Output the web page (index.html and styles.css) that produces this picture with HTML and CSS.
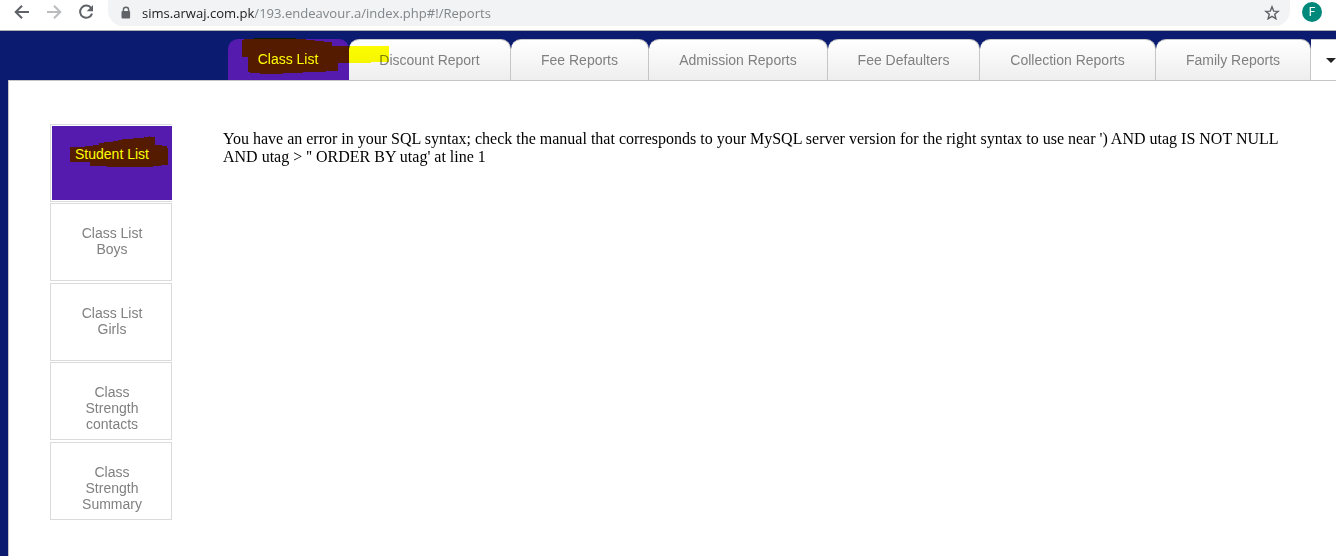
FILE: index.html
```html
<!DOCTYPE html>
<html lang="en">
<head>
<meta charset="utf-8">
<title>Reports</title>
<link rel="stylesheet" href="styles.css">
</head>
<body>
<header class="toolbar">
  <svg class="nav-icons" width="108" height="30" viewBox="0 0 108 30" fill="none" stroke="#5f6368" stroke-width="2">
    <path d="M29 12H16.5M22 5.7L15.7 12L22 18.3"/>
    <path d="M47 12H59.5M54 5.7L60.3 12L54 18.3" stroke="#babcbe"/>
    <path d="M91.2 8.2A6.1 6.1 0 1 0 92 13.6"/>
    <path d="M93 5V11.3H86.7Z" fill="#5f6368" stroke="none"/>
  </svg>
  <div class="address">
    <svg class="lock" width="10" height="14" viewBox="0 0 10 14"><path d="M2.4 6V3.8a2.6 2.6 0 0 1 5.2 0V6" fill="none" stroke="#5f6368" stroke-width="1.4"/><rect x="0.5" y="5" width="8.6" height="7.5" rx="1" fill="#5f6368"/></svg>
    <span class="url"><b>sims.arwaj.com.pk</b>/193.endeavour.a/index.php#!/Reports</span>
    <svg class="star" width="16" height="16" viewBox="0 0 16 16"><path d="M8 1.8L9.7 6.1L14.2 6.4L10.7 9.3L11.9 13.8L8 11.3L4.1 13.8L5.3 9.3L1.8 6.4L6.3 6.1Z" fill="none" stroke="#5f6368" stroke-width="1.4"/></svg>
  </div>
  <span class="avatar">F</span>
</header>
<main class="page">
  <nav class="tabs">
    <a class="tab active w121">Class List</a>
    <a class="tab w162">Discount Report</a>
    <a class="tab w138">Fee Reports</a>
    <a class="tab w179">Admission Reports</a>
    <a class="tab w152">Fee Defaulters</a>
    <a class="tab w176">Collection Reports</a>
    <a class="tab w155">Family Reports</a>
    <span class="more"><svg width="10" height="5" viewBox="0 0 10 5"><path d="M0 0H10L5 5Z" fill="#222"/></svg></span>
    <svg class="marker tab-marker" width="150" height="40" viewBox="0 0 150 40"><path d="M2 3H4V2H14V1H56V2H66V3H75V4H84V5H92V9H149V25H131V26H98V34H86V35H63V36H43V37H20V36H10V35H8V20H2Z" fill="#ff0"/></svg>
  </nav>
  <section class="panel">
    <aside class="side">
      <div class="item selected"><div class="item-text">Student List</div>
        <svg class="marker side-marker" width="100" height="34" viewBox="0 0 100 34"><path d="M0 11H15V10H23V9H29V7H34V6H43V5H48V4H52V3H63V2H74V1H79V0H80V1H85V9H92V10H97V12H98V29H91V30H83V31H37V30H20V26H0Z" fill="#ff0"/></svg>
      </div>
      <div class="item">Class List<br>Boys</div>
      <div class="item">Class List<br>Girls</div>
      <div class="item">Class<br>Strength<br>contacts</div>
      <div class="item">Class<br>Strength<br>Summary</div>
    </aside>
    <p class="error">You have an error in your SQL syntax; check the manual that corresponds to your MySQL server version for the right syntax to use near ') AND utag IS NOT NULL<br>AND utag &gt; '' ORDER BY utag' at line 1</p>
  </section>
</main>
</body>
</html>
```
FILE: styles.css
```css
* { box-sizing: border-box; }
body { margin: 0; width: 1336px; height: 556px; overflow: hidden; display: flex; flex-direction: column; font-family: "Liberation Sans", Arial, sans-serif; background: #fff; }
.toolbar { height: 31px; flex: none; display: flex; align-items: flex-start; border-bottom: 1px solid #adadad; background: #fff; }
.nav-icons { flex: none; }
.address { width: 1182px; height: 26px; display: flex; align-items: center; padding: 0 10px 1px 13px; background: #f1f3f4; border-radius: 0 0 14px 14px / 0 0 16px 16px; }
.lock { margin-right: 11px; }
.url { font: 13.05px/20px "Open Sans", "Noto Sans", sans-serif; color: #80868b; white-space: nowrap; }
.url b { font-weight: 400; color: #202124; }
.star { margin-left: auto; }
.avatar { width: 20px; height: 20px; margin: 2px 0 0 12px; border-radius: 50%; background: #00897b; color: #fff; font: 12px/21px Roboto, sans-serif; text-align: center; }
.page { flex: 1; display: flex; flex-direction: column; background: #0b1c70; }
.tabs { position: relative; height: 49px; flex: none; display: flex; padding: 8px 0 0 228px; }
.tab { flex: none; padding-top: 12px; border: solid #c6c6c6; border-width: 1px 1px 0 0; border-radius: 10px 10px 0 0; background: linear-gradient(#fff, #eee); color: #808080; font-size: 14px; line-height: 16px; text-align: center; }
.tab.active { background: #551bae; border-color: #551bae; color: #fff; padding-top: 11px; }
.w121 { width: 121px; }
.w162 { width: 162px; }
.w138 { width: 138px; }
.w179 { width: 179px; }
.w152 { width: 152px; }
.w176 { width: 176px; }
.w155 { width: 155px; }
.more { flex: 1; display: flex; align-items: center; justify-content: flex-end; overflow: hidden; background: #fff; border-top: 1px solid #c6c6c6; }
.more svg { flex: none; }
.marker { position: absolute; mix-blend-mode: multiply; }
.tab-marker { left: 240px; top: 6px; }
.panel { flex: 1; display: flex; margin-left: 8px; padding: 43px 0 0 41px; background: #fff; border: solid #c6c6c6; border-width: 1px 0 0 1px; }
.side { width: 122px; flex: none; display: flex; flex-direction: column; gap: 1.4px; }
.item { height: 78px; flex: none; padding: 21px 0 0 2px; border: 1px solid #dbdbdb; background: #fff; color: #808080; font-size: 14px; line-height: 16px; text-align: center; }
.item.selected { position: relative; padding: 1px 0 1px 1px; border-right: 0; }
.item-text { height: 74px; padding-top: 20px; background: #551bae; color: #fff; }
.side-marker { left: 19px; top: 11px; }
.error { margin: 6px 0 0 51px; font: 16px/18px "Liberation Serif", "Times New Roman", serif; color: #000; white-space: nowrap; }
```
